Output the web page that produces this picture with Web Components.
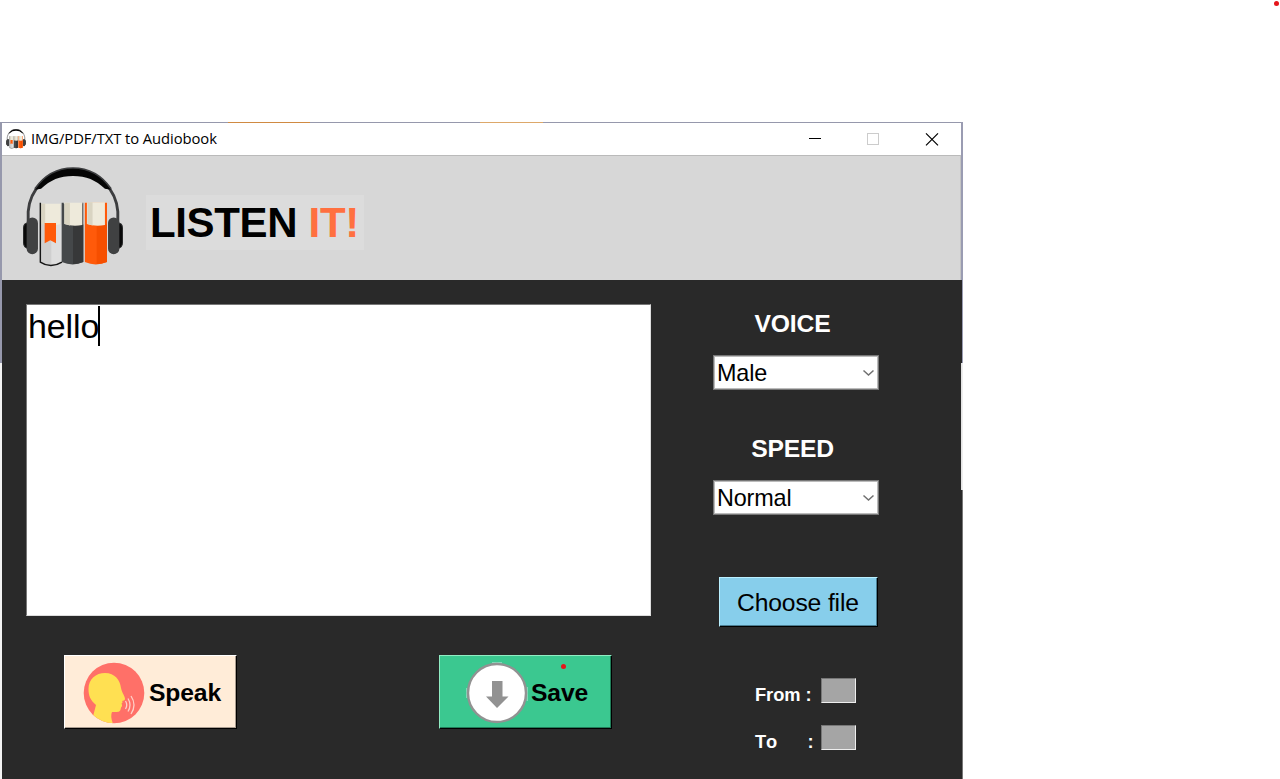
<!DOCTYPE html>
<html lang="en"><head><meta charset="utf-8"><title>IMG/PDF/TXT to Audiobook</title>
<style>
body{margin:0;background:#fff;width:1280px;height:779px;overflow:hidden;position:relative;font-family:"Liberation Sans",Arial,sans-serif;color:#000}
record-dot.corner{position:absolute;left:1274px;top:1px}
app-window{margin-top:122px}
</style></head><body>
<app-window></app-window>
<record-dot class="corner"></record-dot>
<script>
const make=(name,html)=>customElements.define(name,class extends HTMLElement{
  constructor(){super();this.attachShadow({mode:'open'}).innerHTML=html;}
});

make('record-dot',`<style>:host{display:block;width:5px;height:5px}svg{display:block}</style>
<svg width="5" height="5"><circle cx="2.5" cy="2.5" r="2.5" fill="#e5161b"/></svg>`);

make('book-logo',`<style>:host{display:block;width:102px;height:101px}svg{display:block;width:100%;height:100%}</style>
<svg viewBox="1.5 0 99 102" preserveAspectRatio="none">
<path d="M7.500 57V45C9 24 25 3 51 3s42 21 43.500 42v12" fill="none" stroke="#3d3e40" stroke-width="2.800"/>
<path d="M14 23C24 8 36 1 51 1s27 7 37 22l-6-1C73 13 64 9 51 9s-22 4-31 13z" fill="#050505"/>
<path d="M14 22C24 7 36 1 51 1s27 6 37 21" fill="none" stroke="#3d3e40" stroke-width="1.500"/>
<path d="M8 56.500q-5 0-5 5v15q0 5 5 6zM94 56.500q5 0 5 5v15q0 5-5 6z" fill="#080808" stroke="#28292a"/>
<rect x="6" y="51" width="11" height="37" rx="5.500" fill="#404142"/><rect x="85" y="51" width="11" height="37" rx="5.500" fill="#404142"/>
<path d="M20 38h20v58q-10 6-20 0z" fill="#cfcfcf"/><path d="M30 58h10v38q-5 2-10 2z" fill="#dedede"/>
<path d="M20 37h19v21q-10 2-19-1z" fill="#eeeadb"/><path d="M20 37h4v21h-4z" fill="#d9d4c2"/>
<path d="M19.300 36v60q10 7 21 0" fill="none" stroke="#161616" stroke-width="1.400"/>
<path d="M23.500 56.500h11V77l-5.500-3-5.500 3z" fill="#ff5a0a"/>
<path d="M40 36h2v1h18v-1h1v60q-10 5-21 0z" fill="#45484a"/><path d="M51 58h10v38q-5 2-10 2z" fill="#373839"/>
<path d="M42.500 36H60v22.500q-9 2-17.500-1z" fill="#eeeadb"/><path d="M43 36h5v23l-5-1.500z" fill="#d9d4c2"/>
<path d="M62.500 36H84v60q-11 5-21.500 0z" fill="#ff5a0a"/><path d="M74 58h10v38q-5 2-10 2z" fill="#f64f00"/>
<path d="M64.500 35.500H82v23q-9 2-17.500-1z" fill="#eeeadb"/><path d="M65 35.500h5V59l-5-1.500z" fill="#d9d4c2"/>
</svg>`);

make('title-bar',`<style>
:host{display:flex;height:32px;background:#fff;align-items:center;padding-left:4px;font:14.800px "Open Sans","Noto Sans",sans-serif}
book-logo{width:20px;height:20px;margin-bottom:1px}
.name{margin:0 0 2px 5px;letter-spacing:-.08px;white-space:nowrap}
.controls{display:flex;margin-left:auto;width:176px;height:32px}
.controls svg{width:58.500px;height:32px;display:block}
</style><book-logo></book-logo><span class="name">IMG/PDF/TXT to Audiobook</span>
<div class="controls">
<svg viewBox="0 0 58.5 32" shape-rendering="crispEdges"><path d="M24 15.500h12" stroke="#000"/></svg>
<svg viewBox="0 0 58.5 32" shape-rendering="crispEdges"><rect x="23.500" y="10.500" width="11" height="11" fill="none" stroke="#ccc"/></svg>
<svg viewBox="0 0 58.5 32"><path d="M24 10.300l12 12m0-12l-12 12" stroke="#000" stroke-width="1.200"/></svg>
</div>`);

make('brand-header',`<style>
:host{display:flex;box-sizing:border-box;height:125px;background:#d7d7d7;border-top:1px solid #bababa;border-right:1px solid #c4c4c4;padding:11px 0 0 20px}
.word{box-sizing:border-box;margin:28px 0 0 22px;width:218px;height:55px;padding-left:4px;background:#dcdcdc;font:bold 42px/56px "Liberation Sans",Arial,sans-serif;white-space:pre;letter-spacing:-.35px}
i{font-style:normal;color:#ff7040}
</style><book-logo></book-logo><div class="word">LISTEN <i>IT!</i></div>`);

make('text-pad',`<style>
:host{display:flex;box-sizing:border-box;width:625px;height:312px;margin-left:1px;background:#fff;border:1px solid #777;border-right-color:#ddd;border-bottom-color:#ddd;padding:1px}
span{font-size:34px;line-height:40px;height:40px;letter-spacing:-.1px}
b{width:2px;height:40px;background:#000;margin-left:-1px}
</style><span><slot></slot></span><b></b>`);

make('option-picker',`<style>
:host{display:flex;flex-direction:column;align-items:center;width:166px}
.label{color:#fff;font:bold 24.700px/28px "Liberation Sans",Arial,sans-serif;margin-left:-7px;letter-spacing:-.2px;position:relative;top:1px}
.box{box-sizing:border-box;width:166px;height:35px;margin-top:18px;background:#fff;border:1px solid #777;outline:1px solid #bbb;outline-offset:-2px;display:flex;align-items:center;justify-content:space-between;padding:1px 3px 0 3px;font-size:23.400px;line-height:32px;letter-spacing:-.15px}
</style><div class="label"><slot name="label"></slot></div>
<div class="box"><span><slot></slot></span><svg width="13" height="8"><path d="M1.500 1.500l5 4.500 5-4.500" fill="none" stroke="#707070" stroke-width="1.500"/></svg></div>`);

make('raised-button',`<style>
:host{display:flex;box-sizing:border-box;align-items:center;white-space:nowrap;background:var(--face);border:1px solid;border-color:var(--light) #000 #000 var(--light);box-shadow:inset -1px -1px var(--shade);font-size:24.700px;line-height:28px;letter-spacing:-.15px}
</style><slot name="icon"></slot><slot></slot>`);

make('speak-icon',`<style>:host{display:block;width:62px;height:62px}svg{display:block}</style>
<svg width="62" height="62" viewBox="0 0 62 62"><defs><clipPath id="c"><circle cx="31" cy="31" r="30.300"/></clipPath></defs>
<circle cx="31" cy="31" r="30.300" fill="#ff7068"/>
<path clip-path="url(#c)" d="M8 62L13 43C7 38 5.500 33 5.500 27 5.500 17 13 11 22 11c10 0 15 7 16 15 1 5 4 8 4 11 0 1.500-2 1.500-3 2 1 1 .5 2-.5 2.500 1 2 .5 3-.5 4-.5 4-2 4.500-5 4.500h-4q-2 4 1 12z" fill="#ffe052"/>
<path d="M42.500 39q2.500 4 0 8M45 36.500q4 6.500 0 13M48 34q6 9 0 18" fill="none" stroke="#ffd0c8" stroke-width="1.300"/></svg>`);

make('save-icon',`<style>:host{display:block;width:62px;height:62px}svg{display:block}</style>
<svg width="62" height="62" viewBox="0 0 62 62"><path d="M.8 26v10M61.200 25v14M26 .8h10" stroke="#a5dcca" stroke-width="1"/><circle cx="31" cy="31" r="29" fill="#fff" stroke="#929292" stroke-width="2.400"/><path d="M26 19h10.500v15.500H42.500L31 46 20 34.500h6z" fill="#929292"/></svg>`);

make('page-field',`<style>
:host{display:flex;height:25px;align-items:flex-start;color:#fff}
span{width:66px;font:bold 18.300px/21px "Liberation Sans",Arial,sans-serif;white-space:pre;padding-top:6px;letter-spacing:-.05px;font-kerning:none}
div{box-sizing:border-box;width:35px;height:25px;background:#a5a5a5;border:1px solid #777;border-right-color:#eee;border-bottom-color:#eee}
</style><span><slot></slot></span><div></div>`);

make('app-window',`<style>
:host{display:block;box-sizing:border-box;width:963px;height:657px}
.frame{display:grid;grid-template-columns:2px 959px 2px;height:657px}
.left{background:linear-gradient(#9698ac 241px,#f3f3f3 241px)}
.right{background:linear-gradient(#9a9cb2 241px,#eee 241px 368px,#777 368px)}
.right::before{content:"";display:block;width:1px;height:499px;margin-top:158px;background:linear-gradient(#292929 83px,#e4e4e4 83px 210px,#292929 210px)}
.edge{height:1px;background:linear-gradient(90deg,#9698ac 226px,#d08a42 226px 308px,#9698ac 308px 478px,#dda86a 478px 541px,#9698ac 541px)}
main{height:499px;background:#292929;display:grid;grid-template-columns:626px 166px;column-gap:62px;padding:24px 0 0 23px;box-sizing:border-box;align-items:start}
.row{display:flex;padding:39px 39px 0;justify-content:space-between}
.row raised-button{width:173px;height:74px;font-weight:bold;position:relative}
.speak{--face:#ffecd8;--light:#fff;--shade:#a99c8f;padding-left:18px}
.save{--face:#3bc890;--light:#91edc4;--shade:#207e59;padding-left:26px}
.speak speak-icon{margin:1px 4px 0 0}.save save-icon{margin:1px 3px 0 0}
.row raised-button{padding-top:1px}
.save record-dot{position:absolute;left:121px;top:8px}
.side{padding-top:5px}
option-picker+option-picker{margin-top:44px}
.file{--face:#87ceeb;--light:#baf0ff;--shade:#4b7e93;width:159px;height:50px;margin:62px 0 0 6px;padding:1px 0 0 17px}
page-field{margin:51px 0 0 42px}page-field+page-field{margin-top:22px}
</style><div class="frame"><div class="left"></div><div>
<div class="edge"></div><title-bar></title-bar><brand-header></brand-header>
<main><div><text-pad>hello</text-pad><div class="row">
<raised-button class="speak"><speak-icon slot="icon"></speak-icon>Speak</raised-button>
<raised-button class="save"><save-icon slot="icon"></save-icon>Save<record-dot></record-dot></raised-button></div></div>
<div class="side"><option-picker><span slot="label">VOICE</span>Male</option-picker>
<option-picker><span slot="label">SPEED</span>Normal</option-picker>
<raised-button class="file">Choose file</raised-button>
<page-field>From :</page-field><page-field>To      :</page-field></div></main>
</div><div class="right"></div></div>`);
</script></body></html>
